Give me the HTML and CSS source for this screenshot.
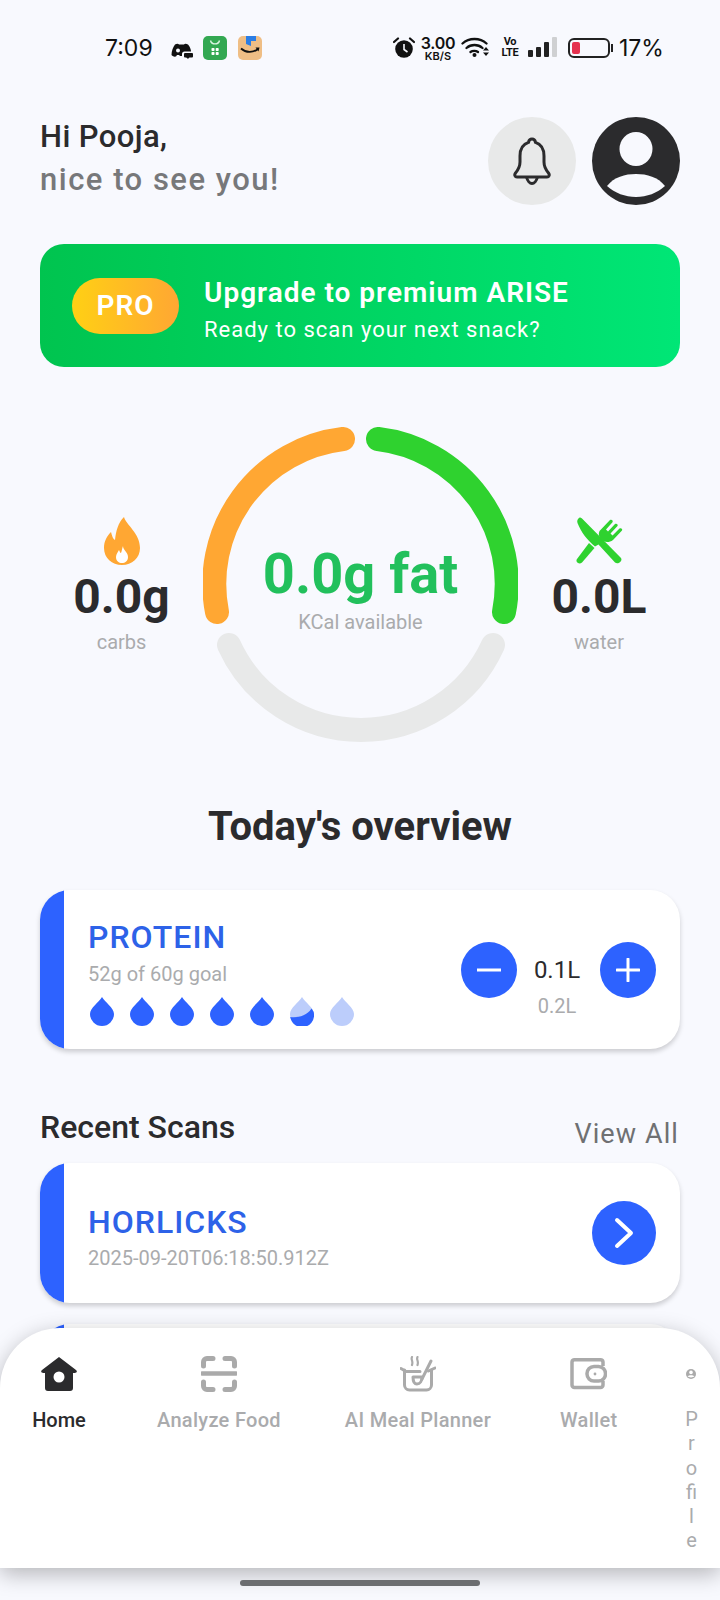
FILE: index.html
```html
<!DOCTYPE html>
<html lang="en">
<head>
<meta charset="utf-8">
<title>Home</title>
<link rel="stylesheet" href="styles.css">
</head>
<body>
<svg class="defs" width="0" height="0" aria-hidden="true">
  <symbol id="drop" viewBox="0 0 24 29"><path d="M12 0C15 5 24 11 24 17A12 12 0 0 1 0 17C0 11 9 5 12 0Z"/></symbol>
</svg>
<div class="screen">
  <div class="status">
    <span class="time">7:09</span>
    <svg class="s-discord" viewBox="0 0 22 16"><path fill="#111" d="M4 1.500C6 .5 7.500 .8 8 1.500H13C13.500 .8 15 .5 17 1.500C19 4 20 6.500 20 8.500H13.500C12 8.500 11 9.500 11 11V13H9L8 12H6L5 13.500C3 14 1 13 .5 12C.5 8 2 4 4 1.500Z"/><circle cx="7" cy="7.500" r="2" fill="#f8f9fe"/><rect x="13" y="10" width="9" height="4.500" rx="1" fill="#111"/><path fill="#111" d="M15 14h3.500l-1.500 2z"/></svg>
    <svg class="s-app" viewBox="0 0 24 24"><rect width="24" height="24" rx="5" fill="#33a852"/><path d="M7.500 4.500C8.500 9 15.500 9 16.500 4.500" fill="none" stroke="#d8f3df" stroke-width="1.400"/><rect x="8.500" y="12" width="3" height="3" rx=".8" fill="#fff"/><rect x="12.700" y="12" width="3" height="3" rx=".8" fill="#fff"/><rect x="8.500" y="16" width="3" height="3" rx=".8" fill="#fff"/><rect x="12.700" y="16" width="3" height="3" rx=".8" fill="#fff"/></svg>
    <svg class="s-app s-amazon" viewBox="0 0 24 24"><rect width="24" height="24" rx="5" fill="#efbe85"/><path d="M8 0H18V5H13V10L8 8Z" fill="#2b7de4"/><path d="M3 12.500C8 17 15 17 20 13" fill="none" stroke="#111" stroke-width="1.800"/><path d="M17.500 11.500L21.500 11.500 20.500 15.500Z" fill="#111"/></svg>
    <span class="status-gap"></span>
    <svg class="s-alarm" viewBox="0 0 22 21"><circle cx="11" cy="12" r="8.800" fill="#111"/><path d="M11 7V12.500L14.500 15" fill="none" stroke="#f8f9fe" stroke-width="1.600"/><path d="M1 5L5 1.500M21 5L17 1.500" stroke="#111" stroke-width="2.200" stroke-linecap="round"/></svg>
    <span class="speed"><span class="speed-n">3.00</span><span class="speed-u">KB/S</span></span>
    <svg class="s-wifi" viewBox="0 0 29 20"><path d="M1.500 6.500C8 .5 19 .5 25.500 6.500M5.500 11C10 7 17 7 21.500 11M9.500 15C11.500 13.500 15 13.500 17 15" fill="none" stroke="#111" stroke-width="2.300" stroke-linecap="round"/><circle cx="13.500" cy="18" r="2" fill="#111"/><path d="M22 13.500h6l-3-3.500zM22 15.500h6l-3 3.500z" fill="#111"/></svg>
    <span class="volte"><span>Vo</span><span>LTE</span></span>
    <span class="signal"><i class="b1"></i><i class="b2"></i><i class="b3"></i><i class="b4"></i></span>
    <span class="battery"><span class="battery-fill"></span></span>
    <span class="battery-tip"></span>
    <span class="pct">17%</span>
  </div>

  <main class="content">
    <header class="header">
      <div class="greet">
        <div class="greet-hi">Hi Pooja,</div>
        <div class="greet-sub">nice to see you!</div>
      </div>
      <div class="bell">
        <svg width="38" height="48" viewBox="0 0 38 48"><path d="M19 2c-2 0-3.200 1.500-3.500 3.400C9 7.500 7 13 7 19v6c0 5-2 8-4.500 11C1 38 2 40 4 40h30c2 0 3-2 1.500-4C33 33 31 30 31 25v-6c0-6-2-11.500-8.500-13.600C22.200 3.500 21 2 19 2Z" fill="none" stroke="#2b2b2d" stroke-width="3"/><path d="M13.500 40c1 4 3.500 6.500 5.500 6.500s4.500-2.500 5.500-6.500" fill="none" stroke="#2b2b2d" stroke-width="3"/></svg>
      </div>
      <svg class="avatar" viewBox="0 0 88 88"><circle cx="44" cy="44" r="44" fill="#2b2b2d"/><ellipse cx="44" cy="32" rx="16.500" ry="17" fill="#f8f9fe"/><path d="M15 69C22 60 33 57 44 57S66 60 73 69C65 76 55 80 44 80S23 76 15 69Z" fill="#f8f9fe"/></svg>
    </header>

    <section class="banner">
      <span class="pro">PRO</span>
      <div class="banner-text">
        <div class="banner-title">Upgrade to premium ARISE</div>
        <div class="banner-sub">Ready to scan your next snack?</div>
      </div>
    </section>

    <section class="stats">
      <div class="stat">
        <svg class="stat-icon" width="36" height="48" viewBox="0 0 36 48"><path fill="#ffa733" d="M20 0C22 8 36 16 36 31C36 41 28 48 18 48C8 48 0 41 0 31C0 24 3 19 7 15C8 19 9 22 11 23C12 14 14 6 20 0Z"/><path fill="#fff" d="M19 29C19 33 24 35 24 40C24 44 21 46 18 46C15 46 12 44 12 40C12 37 14 35 15 33C16 35 16 36 17 36C18 34 18 31 19 29Z"/></svg>
        <div class="stat-value">0.0g</div>
        <div class="stat-label">carbs</div>
      </div>
      <div class="gauge">
        <svg class="gauge-ring" width="315" height="315" viewBox="0 0 315 315" fill="none" stroke-width="24" stroke-linecap="round">
          <path stroke="#ffa733" d="M14 185A146 146 0 0 1 140 12"/>
          <path stroke="#2fd22f" d="M175 12A146 146 0 0 1 301 185"/>
          <path stroke="#e8e9e9" d="M26 218A145 145 0 0 0 290 218"/>
        </svg>
        <div class="gauge-center">
          <div class="gauge-value">0.0g fat</div>
          <div class="gauge-label">KCal available</div>
        </div>
      </div>
      <div class="stat">
        <svg class="stat-icon" width="48" height="48" viewBox="0 0 48 48" fill="#2fd22f"><path d="M4.300 .7C2.500 1.500 1.800 4 2.500 6C6 15 12 23 20 29.500L23.500 27.500L40 45.500C43 48 48 44 46 41L7 1.500C6 .5 5 .4 4.300 .7Z"/><path d="M14 26L19.500 31L7 45.500C4 48 0 45 2 42Z"/><path d="M24.500 14L35 3C36.500 2 38.500 3.500 37.500 5.200L31 12.500L33 14.500L40 7C41.500 6 43.500 7.500 42.500 9L35.500 16.500L37.500 18.500L44.500 11.500C46 10.500 48 12 47 13.500L38 23C34 26 29 25.500 26 22.500C23.500 19.500 23.300 16.500 24.500 14Z"/></svg>
        <div class="stat-value">0.0L</div>
        <div class="stat-label">water</div>
      </div>
    </section>

    <h2 class="overview">Today's overview</h2>

    <section class="card card-protein">
      <div class="card-main">
        <div class="card-title">PROTEIN</div>
        <div class="card-sub">52g of 60g goal</div>
        <div class="drops">
          <svg class="drop"><use href="#drop"/></svg>
          <svg class="drop"><use href="#drop"/></svg>
          <svg class="drop"><use href="#drop"/></svg>
          <svg class="drop"><use href="#drop"/></svg>
          <svg class="drop"><use href="#drop"/></svg>
          <svg class="drop" viewBox="0 0 24 29"><path class="drop-light" d="M12 0C15 5 24 11 24 17A12 12 0 0 1 0 17C0 11 9 5 12 0Z"/><path d="M.2 20C7 21 17 19 21.500 11.500C23 13.500 24 15 24 17A12 12 0 0 1 .2 20Z"/></svg>
          <svg class="drop drop-empty"><use href="#drop"/></svg>
        </div>
      </div>
      <div class="stepper">
        <button class="round round-56" type="button" aria-label="Decrease"><svg width="24" height="24" viewBox="0 0 24 24"><path d="M0 12H24" stroke="#fff" stroke-width="3" stroke-linecap="round"/></svg></button>
        <div class="amount">
          <div class="amount-now">0.1L</div>
          <div class="amount-goal">0.2L</div>
        </div>
        <button class="round round-56" type="button" aria-label="Increase"><svg width="24" height="24" viewBox="0 0 24 24"><path d="M1 12H23M12 1V23" stroke="#fff" stroke-width="3" stroke-linecap="round"/></svg></button>
      </div>
    </section>

    <div class="section-head">
      <h3 class="section-title">Recent Scans</h3>
      <span class="view-all">View All</span>
    </div>

    <section class="card card-scan">
      <div class="card-main">
        <div class="card-title">HORLICKS</div>
        <div class="card-sub card-date">2025-09-20T06:18:50.912Z</div>
      </div>
      <button class="round round-64" type="button" aria-label="Open"><svg width="20" height="32" viewBox="0 0 20 32"><path d="M3 3L17 16L3 29" fill="none" stroke="#fff" stroke-width="4" stroke-linecap="round" stroke-linejoin="round"/></svg></button>
    </section>
    <section class="card card-scan card-next"></section>
  </main>

  <nav class="nav">
    <div class="nav-item nav-home">
      <svg class="nav-icon" width="36" height="34" viewBox="0 0 36 34"><path fill="#2b2b2d" d="M18 0L35 13C36.500 14.500 36 16 33.500 16H32V31C32 33 31 34 29 34H7C5 34 4 33 4 31V16H2.500C0 16-.5 14.500 1 13Z"/><circle cx="18" cy="20" r="5.500" fill="#fff"/></svg>
      <span class="nav-label nav-active">Home</span>
    </div>
    <div class="nav-item nav-scan">
      <svg class="nav-icon" width="36" height="36" viewBox="0 0 36 36" fill="none" stroke="#aaa" stroke-width="5" stroke-linecap="round"><path d="M2.500 10V6A3.500 3.500 0 0 1 6 2.500H12M24 2.500H30A3.500 3.500 0 0 1 33.500 6V10M2.500 26V30A3.500 3.500 0 0 0 6 33.500H12M24 33.500H30A3.500 3.500 0 0 0 33.500 30V26"/><path d="M1 17.500H35" stroke-width="4.500"/></svg>
      <span class="nav-label">Analyze Food</span>
    </div>
    <div class="nav-item nav-meal">
      <svg class="nav-icon" width="36" height="36" viewBox="0 0 36 36" fill="none" stroke="#aaa" stroke-width="3" stroke-linecap="round" stroke-linejoin="round"><path d="M4.500 14V29A5 5 0 0 0 9.500 34H26.500A5 5 0 0 0 31.500 29V14"/><path d="M1 12.500L6 15.500H20M28.500 15L35 12"/><path d="M12 1C10.500 3.500 13.500 5 12 9M17.500 1C16 3.500 19 5 17.500 9" stroke-width="2.200"/><path d="M31 5L22 23"/><path d="M13 21H22C22 25 20 28 17 28C14.500 28 13 25 13 21Z"/></svg>
      <span class="nav-label">AI Meal Planner</span>
    </div>
    <div class="nav-item nav-wallet">
      <svg class="nav-icon" width="37" height="32" viewBox="0 0 37 32" fill="none" stroke="#aaa" stroke-width="3.500" stroke-linejoin="round"><path d="M33 8V4A2.500 2.500 0 0 0 30.500 1.800H4.500A2.500 2.500 0 0 0 2 4V27A2.500 2.500 0 0 0 4.500 29.500H30.500A2.500 2.500 0 0 0 33 27V23"/><rect x="17" y="8.500" width="18.500" height="14.500" rx="7" fill="#fff"/><circle cx="25" cy="16" r="1.400" fill="#aaa" stroke="none"/></svg>
      <span class="nav-label">Wallet</span>
    </div>
    <div class="nav-item nav-profile">
      <svg class="nav-mini" width="10" height="10" viewBox="0 0 10 10"><circle cx="5" cy="5" r="5" fill="#aaa"/><circle cx="5" cy="3.400" r="1.800" fill="#fff"/><path d="M1.500 7.300C3 5.800 7 5.800 8.500 7.300C7 8.800 3 8.800 1.500 7.300Z" fill="#fff"/></svg>
      <span class="nav-label nav-narrow">Profile</span>
    </div>
  </nav>
  <div class="gesture"><span class="gesture-bar"></span></div>
</div>
</body>
</html>
```
FILE: styles.css
```css
* { box-sizing: border-box; }
html, body { margin: 0; padding: 0; }
body { background: #f8f9fe; font-family: Roboto, "Liberation Sans", sans-serif; color: #2b2b2d; }
.defs { position: absolute; }
.screen { position: relative; width: 720px; height: 1600px; overflow: hidden; background: #f8f9fe; }

/* status bar */
.status { height: 96px; padding: 36px 0 0 105px; display: flex; align-items: flex-start; font-family: Inter, sans-serif; color: #111; }
.time { font-size: 23px; line-height: 24px; width: 47px; margin-right: 19px; }
.s-discord { width: 22px; height: 16px; margin-top: 7px; margin-right: 10px; }
.s-app { width: 24px; height: 24px; margin-right: 11px; }
.s-amazon { margin-right: 0; }
.status-gap { width: 131px; }
.s-alarm { width: 22px; height: 21px; margin-top: 1px; margin-right: 6px; }
.speed { display: flex; flex-direction: column; align-items: center; width: 34px; margin-right: 6px; font-weight: 600; }
.speed-n { font-size: 16px; line-height: 14px; letter-spacing: -.3px; }
.speed-u { font-size: 11px; line-height: 11px; margin-top: 1px; }
.s-wifi { width: 29px; height: 20px; margin-top: 1px; margin-right: 12px; }
.volte { display: flex; flex-direction: column; align-items: center; width: 16px; font-family: Roboto, sans-serif; font-size: 11px; line-height: 11px; font-weight: 700; letter-spacing: -.3px; margin-right: 10px; }
.signal { display: flex; align-items: flex-end; gap: 3px; height: 20px; margin-top: 1px; margin-right: 12px; }
.signal i { display: block; width: 5px; background: #222; border-radius: 1px; }
.signal .b1 { height: 7px; }
.signal .b2 { height: 10px; }
.signal .b3 { height: 15px; }
.signal .b4 { height: 20px; background: #cfd0d2; }
.battery { display: block; width: 42px; height: 20px; margin-top: 2px; border: 2px solid #222; border-radius: 6px; padding: 2px; margin-left: -1px; }
.battery-fill { display: block; width: 8px; height: 100%; background: #e5324f; border-radius: 2px; }
.battery-tip { width: 2px; height: 8px; margin-top: 8px; background: #222; margin-right: 6px; margin-left: 1px; }
.pct { font-size: 23px; line-height: 24px; }

/* content */
.content { padding: 0 40px; }
.header { display: flex; align-items: center; margin-top: 21px; height: 88px; }
.greet { flex: 1; margin-top: -6px; }
.greet-hi { font-size: 31px; line-height: 43px; font-weight: 500; letter-spacing: .4px; color: #2b2b2d; }
.greet-sub { font-size: 31px; line-height: 43px; font-weight: 500; letter-spacing: 1.5px; color: #77787a; }
.bell { width: 88px; height: 88px; border-radius: 50%; background: #e8e9e9; display: flex; align-items: center; justify-content: center; margin-right: 16px; }
.avatar { width: 88px; height: 88px; }

.banner { margin-top: 39px; height: 123px; border-radius: 24px; background: linear-gradient(90deg, #00c44f, #00e676); display: flex; align-items: center; padding-left: 32px; }
.pro { width: 107px; height: 56px; border-radius: 28px; background: linear-gradient(90deg, #ffd014, #ffa733); color: #fff; font-size: 28px; font-weight: 600; letter-spacing: 1px; display: flex; align-items: center; justify-content: center; }
.banner-text { margin-left: 25px; padding-top: 9px; color: #fff; }
.banner-title { font-size: 28px; line-height: 36px; font-weight: 600; letter-spacing: 1px; }
.banner-sub { font-size: 22px; line-height: 30px; margin-top: 4px; letter-spacing: 1px; }

.stats { margin-top: 60px; display: grid; grid-template-columns: 163px 315px 162px; }
.stat { display: flex; flex-direction: column; align-items: center; padding-top: 90px; }
.stat-icon { display: block; }
.stat-value { font-size: 48px; line-height: 56px; font-weight: 700; color: #2b2b2d; margin-top: 4px; }
.stat-label { font-size: 20px; line-height: 24px; color: #aaabad; margin-top: 5px; }

.gauge { display: grid; width: 315px; height: 315px; }
.gauge-ring, .gauge-center { grid-area: 1 / 1; }
.gauge-center { text-align: center; padding-top: 115px; }
.gauge-value { font-size: 56px; line-height: 64px; font-weight: 700; color: #22c05c; }
.gauge-label { font-size: 20px; line-height: 24px; color: #aaabad; margin-top: 4px; }

.overview { margin: 61px 0 0; text-align: center; font-size: 40px; line-height: 48px; font-weight: 700; color: #2b2b2d; }

.card { background: #fff; border-radius: 30px; display: flex; align-items: center; overflow: hidden; box-shadow: 0 3px 5px rgba(0,0,0,.18); padding-right: 24px; }
.card::before { content: ""; flex: none; align-self: stretch; width: 24px; background: #2d62ff; margin-right: 24px; }
.card-protein { margin-top: 39px; height: 159px; }
.card-main { display: flex; flex-direction: column; flex: 1; padding-top: 6px; }
.card-title { font-size: 32px; line-height: 36px; font-weight: 500; letter-spacing: 1px; color: #2d62e8; }
.card-sub { font-size: 20px; line-height: 24px; color: #aaabad; margin-top: 7px; }
.drops { display: flex; gap: 16px; margin-top: 11px; margin-left: 2px; fill: #2d62ff; }
.drop { width: 24px; height: 29px; display: block; }
.drop-light, .drop-empty { fill: #bccdfb; }

.stepper { display: flex; align-items: flex-start; margin-top: 21px; }
.round { border: 0; padding: 0; border-radius: 50%; background: #2d62ff; display: flex; align-items: center; justify-content: center; }
.round-56 { width: 56px; height: 56px; }
.round-64 { width: 64px; height: 64px; }
.amount { width: 83px; text-align: center; padding: 14px 3px 0 0; }
.amount-now { font-size: 24px; line-height: 28px; color: #2b2b2d; }
.amount-goal { font-size: 20px; line-height: 24px; color: #aaabad; margin-top: 10px; }

.section-head { display: flex; justify-content: space-between; align-items: flex-end; margin-top: 60px; height: 40px; }
.section-title { margin: 0 0 2px; font-size: 32px; line-height: 40px; font-weight: 500; color: #2b2b2d; }
.view-all { font-size: 27px; line-height: 36px; letter-spacing: 1.100px; color: #6f7072; margin-right: 1px; margin-bottom: -3px; }

.card-scan { margin-top: 14px; height: 140px; }
.card-scan .card-main { padding-top: 8px; }
.card-date { margin-top: 6px; }
.card-next { margin-top: 21px; }

/* bottom nav */
.nav { position: absolute; left: 0; right: 0; top: 1328px; height: 240px; background: #fff; border-radius: 60px 60px 0 0; box-shadow: 0 6px 22px rgba(0,0,0,.28); display: flex; align-items: flex-start; padding: 28px 0 0 32px; }
.nav-item { display: flex; flex-direction: column; align-items: center; flex: none; }
.nav-icon { display: block; height: 36px; }
.nav-label { font-size: 20px; line-height: 24px; margin-top: 16px; font-weight: 500; letter-spacing: .3px; color: #aaabad; white-space: nowrap; }
.nav-active { color: #2b2b2d; letter-spacing: 0; }
.nav-home { width: 54px; }
.nav-scan { margin-left: 71px; }
.nav-meal { margin-left: 64px; }
.nav-wallet { margin-left: 69px; }
.nav-profile { margin-left: 63px; width: 22px; padding-top: 13px; }
.nav-mini { display: block; }
.nav-narrow { white-space: normal; width: 12px; word-break: break-all; text-align: center; margin-top: 28px; font-weight: 400; letter-spacing: 0; line-height: 24.300px; display: flex; flex-direction: column; align-items: center; }

.gesture { position: absolute; left: 0; right: 0; bottom: 0; height: 32px; display: flex; justify-content: center; align-items: flex-start; padding-top: 12px; }
.gesture-bar { width: 240px; height: 6px; border-radius: 3px; background: #6b6d70; }
```
